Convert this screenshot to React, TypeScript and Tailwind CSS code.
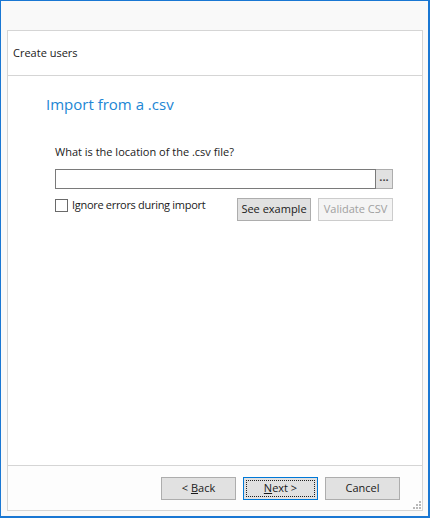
import React from "react";

const font = { fontFamily: '"Open Sans", "Noto Sans", sans-serif' };

function Btn({ children, disabled, w = 75 }: { children: React.ReactNode; disabled?: boolean; w?: number }) {
  return (
    <div
      className={
        "flex items-center justify-center text-[11px] " +
        (disabled
          ? "border border-[#cccccc] bg-[#f4f4f4] text-[#a0a0a0]"
          : "border border-[#adadad] bg-[#e1e1e1] text-[#1a1a1a]")
      }
      style={{ width: w }}
    >
      {children}
    </div>
  );
}

function Grip() {
  const pts = [
    [6, 0],
    [3, 3],
    [6, 3],
    [0, 6],
    [3, 6],
    [6, 6],
  ];
  return (
    <svg width="8" height="8" className="absolute right-[1px] bottom-[1px]">
      {pts.map(([x, y], i) => (
        <rect key={i} x={x} y={y} width="2" height="2" fill="#b8b8b8" />
      ))}
    </svg>
  );
}

export default function App() {
  return (
    <div className="w-[430px] h-[518px] bg-[#f9f9f9] border-l border-t border-r-2 border-b-2 border-[#1977d3] flex flex-col" style={font}>
      <div className="h-[29px] shrink-0" />
      <div className="mx-[6px] mr-[5px] h-[481px] border border-[#d5d5d5] bg-white flex flex-col">
        <div className="h-[45px] border-b border-[#d5d5d5] flex items-center pl-[5px] text-[11px] text-[#1a1a1a]">
          Create users
        </div>
        <div className="flex-1 flex flex-col pl-[38px]">
          <div className="mt-[17px] text-[15px] text-[#2186d4] leading-[22px]">Import from a .csv</div>
          <div className="mt-[29px] ml-[9px] text-[11px] text-[#1a1a1a] leading-[16px]">What is the location of the .csv file?</div>
          <div className="mt-[9px] ml-[9px] flex h-[20px] w-[338px]">
            <div className="flex-1 border border-[#7a7a7a] bg-white" />
            <div className="w-[17px] border border-l-0 border-[#adadad] bg-[#e1e1e1] flex items-center justify-center text-[11px] font-bold text-[#444] leading-none pb-[5px]">
              ...
            </div>
          </div>
          <div className="mt-[9px] ml-[9px] flex w-[338px]">
            <div className="flex items-start gap-[4px] flex-1 pt-[1px]">
              <div className="w-[13px] h-[13px] border border-[#6a6a6a] bg-white" />
              <div className="text-[11px] tracking-[-0.3px] text-[#1a1a1a] leading-[14px] -mt-[1px]">Ignore errors during import</div>
            </div>
            <div className="flex gap-[7px] h-[23px]">
              <Btn w={74}>See example</Btn>
              <Btn disabled>Validate CSV</Btn>
            </div>
          </div>
        </div>
        <div className="relative h-[45px] border-t border-[#d5d5d5] bg-[#fdfdfd] flex items-start pt-[11px] pl-[153px]">
          <div className="h-[23px] flex gap-[7px]">
            <Btn>
              <span>
                &lt; <u>B</u>ack
              </span>
            </Btn>
            <div className="w-[75px] border border-[#0078d7] bg-[#e1e1e1] p-[2px]">
              <div className="w-full h-full border border-dotted border-[#222] flex items-center justify-center text-[11px] text-[#1a1a1a]">
                <span>
                  <u>N</u>ext &gt;
                </span>
              </div>
            </div>
            <Btn>Cancel</Btn>
          </div>
          <Grip />
        </div>
      </div>
    </div>
  );
}
